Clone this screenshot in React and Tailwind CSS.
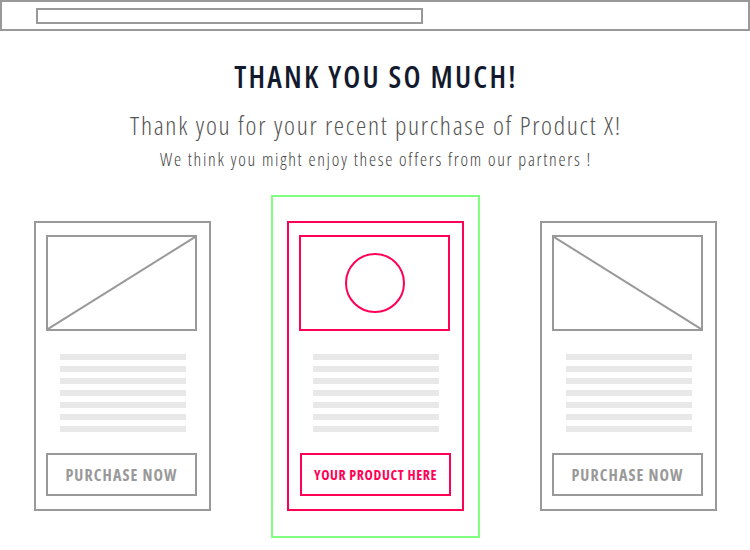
import React from 'react'

function TextLines({ color }) {
  return (
    <div className="mt-[23px] flex flex-col gap-[6px] px-[14px]">
      {[0, 1, 2, 3, 4, 5, 6].map(function (i) {
        return <div key={i} className={'h-[6px] w-[126px] ' + color} />
      })}
    </div>
  )
}

function GrayCard({ flip }) {
  return (
    <div className="w-[177px] h-[290px] border-2 border-[#999] px-[10px] pt-[12px] flex flex-col">
      <div className="relative w-[151px] h-[96px] border-2 border-[#999]">
        <svg className="absolute inset-0 w-full h-full" viewBox="0 0 100 100" preserveAspectRatio="none">
          {flip ? (
            <line x1="0" y1="0" x2="100" y2="100" stroke="#999" strokeWidth="2" vectorEffect="non-scaling-stroke" />
          ) : (
            <line x1="0" y1="100" x2="100" y2="0" stroke="#999" strokeWidth="2" vectorEffect="non-scaling-stroke" />
          )}
        </svg>
      </div>
      <TextLines color="bg-[#e8e8e8]" />
      <div className="mt-[21px] w-[151px] h-[43px] border-2 border-[#999] flex items-center justify-center text-[16px] font-bold font-stretch-condensed text-[#999] tracking-[1.1px]">
        PURCHASE NOW
      </div>
    </div>
  )
}

export default function App() {
  return (
    <div className="w-[750px] h-[550px] bg-white overflow-hidden" style={{ fontFamily: '"Open Sans", "DejaVu Sans", sans-serif' }}>
      {/* top bar */}
      <div className="h-[31px] border-2 border-[#999] pt-[6px]">
        <div className="ml-[34px] w-[387px] h-[16px] border-2 border-[#999]" />
      </div>

      {/* heading */}
      <div className="flex flex-col items-center">
        <h1 className="mt-[25px] h-[42px] leading-[42px] text-[30px] font-semibold font-stretch-condensed text-[#141a2e] tracking-[2.2px] pl-[2px]">
          THANK YOU SO MUCH!
        </h1>
        <p className="mt-[10px] h-[34px] leading-[34px] text-[26px] font-light font-stretch-condensed text-[#555] tracking-[1.7px] pl-[2px]">
          Thank you for your recent purchase of Product X!
        </p>
        <p className="mt-[5px] h-[24px] leading-[24px] text-[18px] font-light font-stretch-condensed text-[#444] tracking-[1.7px] pl-[2px]">
          We think you might enjoy these offers from our partners !
        </p>
      </div>

      {/* offers */}
      <div className="mt-[24px] flex items-start pl-[34px] gap-[60px]">
        <div className="mt-[26px]">
          <GrayCard />
        </div>

        <div className="w-[209px] h-[343px] border-2 border-[#80ff80] px-[14px] pt-[24px]">
          <div className="w-[177px] h-[290px] border-2 border-[#ff0055] px-[10px] pt-[12px] flex flex-col">
            <div className="w-[151px] h-[96px] border-2 border-[#ff0055] flex items-center justify-center">
              <div className="w-[60px] h-[60px] rounded-full border-2 border-[#ff0055]" />
            </div>
            <TextLines color="bg-[#e8e8e8]" />
            <div className="mt-[21px] ml-[1px] w-[151px] h-[43px] border-2 border-[#ff0055] flex items-center justify-center text-[14px] font-bold font-stretch-condensed text-[#ff0055] tracking-[0.6px] whitespace-nowrap">
              YOUR PRODUCT HERE
            </div>
          </div>
        </div>

        <div className="mt-[26px]">
          <GrayCard flip />
        </div>
      </div>
    </div>
  )
}
